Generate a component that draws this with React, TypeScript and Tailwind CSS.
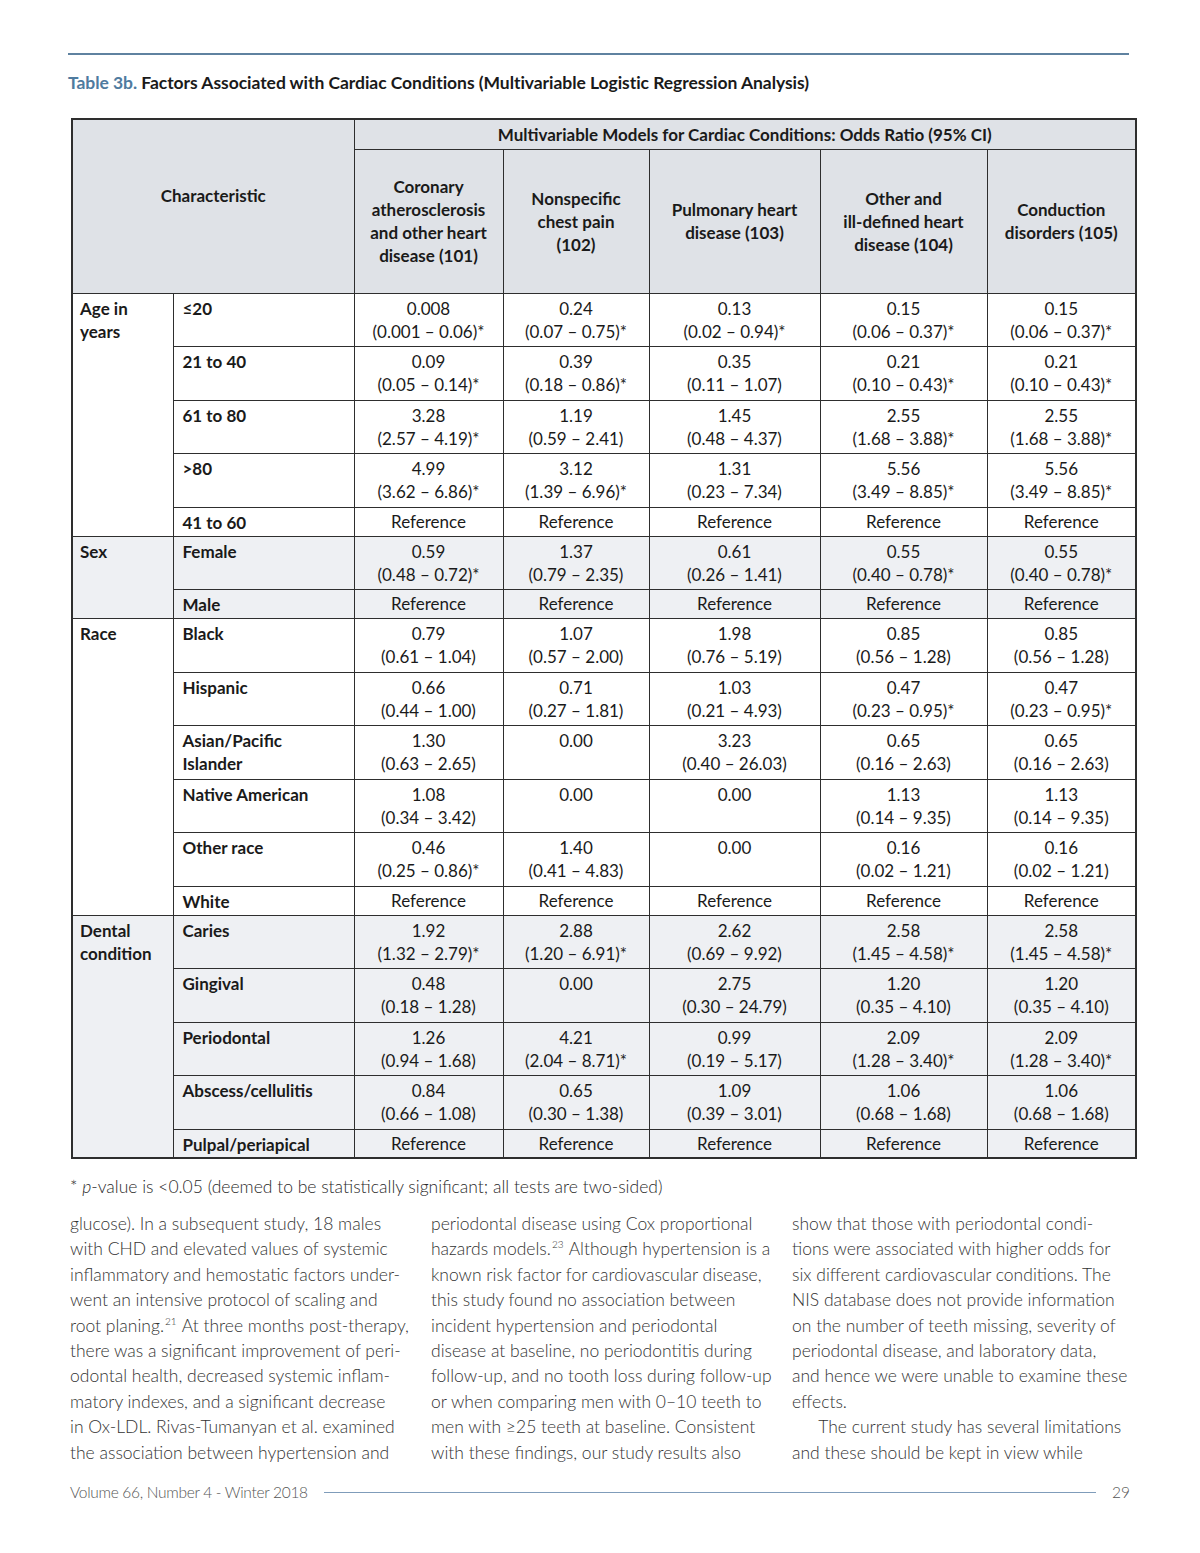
type Row = { label: string; vals: [string, string][] | string };

type Group = { name: string; grey: boolean; rows: Row[] };

const REF = "Reference";

const groups: Group[] = [
  {
    name: "Age in\nyears",
    grey: false,
    rows: [
      { label: "≤20", vals: [["0.008", "(0.001 – 0.06)*"], ["0.24", "(0.07 – 0.75)*"], ["0.13", "(0.02 – 0.94)*"], ["0.15", "(0.06 – 0.37)*"], ["0.15", "(0.06 – 0.37)*"]] },
      { label: "21 to 40", vals: [["0.09", "(0.05 – 0.14)*"], ["0.39", "(0.18 – 0.86)*"], ["0.35", "(0.11 – 1.07)"], ["0.21", "(0.10 – 0.43)*"], ["0.21", "(0.10 – 0.43)*"]] },
      { label: "61 to 80", vals: [["3.28", "(2.57 – 4.19)*"], ["1.19", "(0.59 – 2.41)"], ["1.45", "(0.48 – 4.37)"], ["2.55", "(1.68 – 3.88)*"], ["2.55", "(1.68 – 3.88)*"]] },
      { label: ">80", vals: [["4.99", "(3.62 – 6.86)*"], ["3.12", "(1.39 – 6.96)*"], ["1.31", "(0.23 – 7.34)"], ["5.56", "(3.49 – 8.85)*"], ["5.56", "(3.49 – 8.85)*"]] },
      { label: "41 to 60", vals: REF },
    ],
  },
  {
    name: "Sex",
    grey: true,
    rows: [
      { label: "Female", vals: [["0.59", "(0.48 – 0.72)*"], ["1.37", "(0.79 – 2.35)"], ["0.61", "(0.26 – 1.41)"], ["0.55", "(0.40 – 0.78)*"], ["0.55", "(0.40 – 0.78)*"]] },
      { label: "Male", vals: REF },
    ],
  },
  {
    name: "Race",
    grey: false,
    rows: [
      { label: "Black", vals: [["0.79", "(0.61 – 1.04)"], ["1.07", "(0.57 – 2.00)"], ["1.98", "(0.76 – 5.19)"], ["0.85", "(0.56 – 1.28)"], ["0.85", "(0.56 – 1.28)"]] },
      { label: "Hispanic", vals: [["0.66", "(0.44 – 1.00)"], ["0.71", "(0.27 – 1.81)"], ["1.03", "(0.21 – 4.93)"], ["0.47", "(0.23 – 0.95)*"], ["0.47", "(0.23 – 0.95)*"]] },
      { label: "Asian/Pacific\nIslander", vals: [["1.30", "(0.63 – 2.65)"], ["0.00", ""], ["3.23", "(0.40 – 26.03)"], ["0.65", "(0.16 – 2.63)"], ["0.65", "(0.16 – 2.63)"]] },
      { label: "Native American", vals: [["1.08", "(0.34 – 3.42)"], ["0.00", ""], ["0.00", ""], ["1.13", "(0.14 – 9.35)"], ["1.13", "(0.14 – 9.35)"]] },
      { label: "Other race", vals: [["0.46", "(0.25 – 0.86)*"], ["1.40", "(0.41 – 4.83)"], ["0.00", ""], ["0.16", "(0.02 – 1.21)"], ["0.16", "(0.02 – 1.21)"]] },
      { label: "White", vals: REF },
    ],
  },
  {
    name: "Dental\ncondition",
    grey: true,
    rows: [
      { label: "Caries", vals: [["1.92", "(1.32 – 2.79)*"], ["2.88", "(1.20 – 6.91)*"], ["2.62", "(0.69 – 9.92)"], ["2.58", "(1.45 – 4.58)*"], ["2.58", "(1.45 – 4.58)*"]] },
      { label: "Gingival", vals: [["0.48", "(0.18 – 1.28)"], ["0.00", ""], ["2.75", "(0.30 – 24.79)"], ["1.20", "(0.35 – 4.10)"], ["1.20", "(0.35 – 4.10)"]] },
      { label: "Periodontal", vals: [["1.26", "(0.94 – 1.68)"], ["4.21", "(2.04 – 8.71)*"], ["0.99", "(0.19 – 5.17)"], ["2.09", "(1.28 – 3.40)*"], ["2.09", "(1.28 – 3.40)*"]] },
      { label: "Abscess/cellulitis", vals: [["0.84", "(0.66 – 1.08)"], ["0.65", "(0.30 – 1.38)"], ["1.09", "(0.39 – 3.01)"], ["1.06", "(0.68 – 1.68)"], ["1.06", "(0.68 – 1.68)"]] },
      { label: "Pulpal/periapical", vals: REF },
    ],
  },
];

// body text, broken where the page breaks it
const col1 = [
  "glucose). In a subsequent study, 18 males",
  "with CHD and elevated values of systemic",
  "inflammatory and hemostatic factors under-",
  "went an intensive protocol of scaling and",
  "root planing.|21| At three months post-therapy,",
  "there was a significant improvement of peri-",
  "odontal health, decreased systemic inflam-",
  "matory indexes, and a significant decrease",
  "in Ox-LDL. Rivas-Tumanyan et al. examined",
  "the association between hypertension and",
];
const col2 = [
  "periodontal disease using Cox proportional",
  "hazards models.|23| Although hypertension is a",
  "known risk factor for cardiovascular disease,",
  "this study found no association between",
  "incident hypertension and periodontal",
  "disease at baseline, no periodontitis during",
  "follow-up, and no tooth loss during follow-up",
  "or when comparing men with 0–10 teeth to",
  "men with ≥25 teeth at baseline. Consistent",
  "with these findings, our study results also",
];
const col3 = [
  "show that those with periodontal condi-",
  "tions were associated with higher odds for",
  "six different cardiovascular conditions. The",
  "NIS database does not provide information",
  "on the number of teeth missing, severity of",
  "periodontal disease, and laboratory data,",
  "and hence we were unable to examine these",
  "effects.",
  "\u2003\u2003The current study has several limitations",
  "and these should be kept in view while",
];

function Line({ text }: { text: string }) {
  const parts = text.split("|");
  return (
    <div className="whitespace-pre">
      {parts.map((p, i) =>
        i % 2 === 1 ? (
          <sup key={i} className="text-[10px] relative -top-[7px] ml-[1px] mr-[1px]">
            {p}
          </sup>
        ) : (
          <span key={i}>{p}</span>
        )
      )}
    </div>
  );
}

const cell = "border-[1.5px] border-[#2e2e2e]";

function Cell({ v }: { v: [string, string] | string }) {
  const two = Array.isArray(v);
  return (
    <td className={`${cell} text-center align-top px-1 ${two ? "h-[53.5px] pt-[3px]" : "h-[29px] pt-[2px]"}`}>
      {two ? (
        <>
          <div>{v[0]}</div>
          <div>{v[1] || "\u00a0"}</div>
        </>
      ) : (
        v
      )}
    </td>
  );
}

export default function App() {
  return (
    <div className="w-[1200px] h-[1553px] bg-white relative font-['Lato',sans-serif] text-[#1a1a1a]">
      <div className="pt-[53px] px-[68px]">
        <div className="h-[2px] bg-[#5f82a0] w-[1061px]" />
        <h2 className="mt-[18px] text-[17.5px] font-bold leading-5 tracking-[-0.05px]">
          <span className="text-[#4f7b9f]">Table 3b.</span> Factors Associated with Cardiac Conditions (Multivariable Logistic Regression Analysis)
        </h2>
      </div>

      <div className="ml-[71px] mt-[25px] w-[1064px]">
        <table className="w-full border-collapse table-fixed border-2 border-[#2e2e2e] text-[17px] leading-[23px]">
          <colgroup>
            <col className="w-[101px]" />
            <col className="w-[181px]" />
            <col className="w-[149px]" />
            <col className="w-[146px]" />
            <col className="w-[171px]" />
            <col className="w-[167px]" />
            <col className="w-[149px]" />
          </colgroup>
          <thead className="bg-[#dfe2e7] font-bold">
            <tr className="h-[30px]">
              <th colSpan={2} rowSpan={2} className={`${cell} font-bold pb-[22px]`}>
                Characteristic
              </th>
              <th colSpan={5} className={`${cell} font-bold`}>
                Multivariable Models for Cardiac Conditions: Odds Ratio (95% CI)
              </th>
            </tr>
            <tr className="h-[144px]">
              <th className={`${cell} font-bold px-1`}>Coronary atherosclerosis and other heart disease (101)</th>
              <th className={`${cell} font-bold px-5`}>Nonspecific chest pain (102)</th>
              <th className={`${cell} font-bold px-3`}>Pulmonary heart disease (103)</th>
              <th className={`${cell} font-bold px-1`}>
                Other and
                <br />
                ill-defined heart disease (104)
              </th>
              <th className={`${cell} font-bold px-2`}>Conduction disorders (105)</th>
            </tr>
          </thead>
          <tbody>
            {groups.map((g) =>
              g.rows.map((r, i) => (
                <tr key={g.name + r.label} className={g.grey ? "bg-[#eef0f3]" : "bg-white"}>
                  {i === 0 && (
                    <td rowSpan={g.rows.length} className={`${cell} align-top font-bold whitespace-pre-line px-[7px] pt-[3px]`}>
                      {g.name}
                    </td>
                  )}
                  <td className={`${cell} align-top font-bold whitespace-pre-line px-[9px] pt-[3px]`}>{r.label}</td>
                  {typeof r.vals === "string"
                    ? [0, 1, 2, 3, 4].map((k) => <Cell key={k} v={REF} />)
                    : r.vals.map((v, k) => <Cell key={k} v={v} />)}
                </tr>
              ))
            )}
          </tbody>
        </table>
      </div>

      <p className="ml-[70px] mt-[16px] text-[17.5px] leading-6 text-[#2a2a2a] font-light">
        * <span className="italic">p</span>-value is &lt;0.05 (deemed to be statistically significant; all tests are two-sided)
      </p>

      <div className="ml-[70px] mt-[12px] w-[1062px] grid grid-cols-[361px_361px_340px] text-[17.5px] leading-[25.4px] text-[#333] font-light">
        <div>
          {col1.map((t) => (
            <Line key={t} text={t} />
          ))}
        </div>
        <div>
          {col2.map((t) => (
            <Line key={t} text={t} />
          ))}
        </div>
        <div>
          {col3.map((t) => (
            <Line key={t} text={t} />
          ))}
        </div>
      </div>

      <div className="absolute left-[70px] right-[70px] top-[1481px] flex items-center gap-3 text-[15.5px] text-[#555] font-light">
        <span className="tracking-[-0.3px]">Volume 66, Number 4 - Winter 2018</span>
        <div className="flex-1 h-px bg-[#7f9cba] mx-[4px]" />
        <span>29</span>
      </div>
    </div>
  );
}
